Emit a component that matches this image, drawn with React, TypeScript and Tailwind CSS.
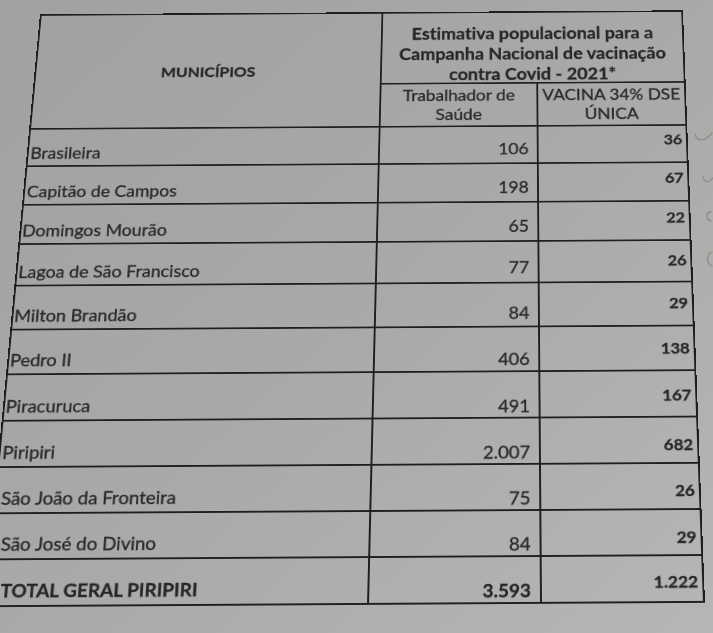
import React from "react";

type Row = {
  name: string;
  a: string;
  b: string;
  h: string;
  pl: string;
  c2: string;
  c3: string;
  total?: boolean;
};

const rows: Row[] = [
  { name: "Brasileira", a: "106", b: "36", h: "h-[46.9px]", pl: "pl-[2px]", c2: "pb-[5px]", c3: "pb-[10px]" },
  { name: "Capitão de Campos", a: "198", b: "67", h: "h-[46.2px]", pl: "pl-[2px]", c2: "pb-[5px]", c3: "pb-[8px]" },
  { name: "Domingos Mourão", a: "65", b: "22", h: "h-[47.9px]", pl: "pl-[1px]", c2: "pb-[5px]", c3: "pb-[7px]" },
  { name: "Lagoa de São Francisco", a: "77", b: "26", h: "h-[48.4px]", pl: "pl-[1px]", c2: "pb-[5px]", c3: "pb-[2px]" },
  { name: "Milton Brandão", a: "84", b: "29", h: "h-[51px]", pl: "pl-[1px]", c2: "pb-[3px]", c3: "pb-0" },
  { name: "Pedro II", a: "406", b: "138", h: "h-[51.3px]", pl: "pl-[1px]", c2: "pb-[1px]", c3: "pb-0" },
  { name: "Piracuruca", a: "491", b: "167", h: "h-[51.6px]", pl: "pl-[1px]", c2: "pb-0", c3: "pt-[4px]" },
  { name: "Piripiri", a: "2.007", b: "682", h: "h-[51.7px]", pl: "pl-[2px]", c2: "pb-0", c3: "pt-[10px]" },
  { name: "São João da Fronteira", a: "75", b: "26", h: "h-[49.8px]", pl: "pl-[5px]", c2: "pb-0", c3: "pt-[10px]" },
  { name: "São José do Divino", a: "84", b: "29", h: "h-[48.9px]", pl: "pl-[9px]", c2: "pb-0", c3: "pt-[10px]" },
  {
    name: "TOTAL GERAL PIRIPIRI",
    a: "3.593",
    b: "1.222",
    h: "h-[49.2px]",
    pl: "pl-[13px]",
    c2: "pb-0",
    c3: "pt-[6px]",
    total: true,
  },
];

function Marks() {
  return (
    <svg
      className="absolute right-0 top-[120px] w-[22px] h-[160px]"
      viewBox="0 0 22 160"
      fill="none"
      stroke="#8e8e8c"
      strokeWidth="1.3"
      strokeLinecap="round"
    >
      <path d="M4 14 C6 22 14 22 21 13" />
      <path d="M12 56 C13 63 18 63 22 58" />
      <path d="M20 92 C15 92 14 99 20 101" />
      <path d="M21 132 C15 134 15 144 21 146" />
    </svg>
  );
}

export default function App() {
  return (
    <div className="relative w-[713px] h-[633px] overflow-hidden flex flex-col justify-end pb-[28px] bg-linear-to-br from-[#a1a19f] via-[#a9a9a7] to-[#b6b6b4] font-[family-name:Lato,sans-serif] text-[#262626] [font-variant-ligatures:no-common-ligatures] [-webkit-text-stroke:0.3px_currentColor]">
      <div className="-ml-4 w-[721px] shrink-0 origin-bottom [transform:rotate(-0.35deg)_perspective(1500px)_rotateX(15.31deg)_skewX(-1.92deg)] border-l-2 border-t-2 border-[#1f1f1f]">
        <div className="grid grid-cols-[383px_173px_163px] grid-rows-[90.5px_54px]">
          <div className="row-span-2 border-r-2 border-b-2 border-[#1f1f1f] flex items-center justify-center pt-[6px] font-bold text-[17.5px]">
            MUNICÍPIOS
          </div>
          <div className="col-span-2 border-r-2 border-b-2 border-[#1f1f1f] flex flex-col items-center justify-center pt-[15px] font-bold text-[20px] leading-[26px]">
            <span>Estimativa populacional para a</span>
            <span>Campanha Nacional de vacinação</span>
            <span>contra Covid - 2021*</span>
          </div>
          <div className="border-r-2 border-b-2 border-[#1f1f1f] flex flex-col items-center justify-center text-[19px] leading-[24px]">
            <span>Trabalhador de</span>
            <span>Saúde</span>
          </div>
          <div className="border-r-2 border-b-2 border-[#1f1f1f] flex flex-col items-center justify-center text-[19px] leading-[24px] whitespace-nowrap">
            <span>VACINA 34% DSE</span>
            <span>ÚNICA</span>
          </div>
        </div>
        {rows.map((r) => (
          <div key={r.name} className={`grid grid-cols-[383px_173px_163px] ${r.h}`}>
            <div
              className={`border-r-2 border-b-2 border-[#1f1f1f] flex items-end pb-[3px] text-[19px] leading-[24px] whitespace-nowrap ${r.pl} ${
                r.total ? "font-bold" : ""
              }`}
            >
              {r.name}
            </div>
            <div
              className={`border-r-2 border-b-2 border-[#1f1f1f] flex items-end justify-end pr-[9px] text-[19px] leading-[24px] ${r.c2} ${
                r.total ? "font-bold" : ""
              }`}
            >
              {r.a}
            </div>
            <div
              className={`border-r-2 border-b-2 border-[#1f1f1f] flex items-center justify-end pr-[4px] text-[17.5px] leading-[22px] font-bold ${r.c3}`}
            >
              {r.b}
            </div>
          </div>
        ))}
      </div>
      <Marks />
    </div>
  );
}
